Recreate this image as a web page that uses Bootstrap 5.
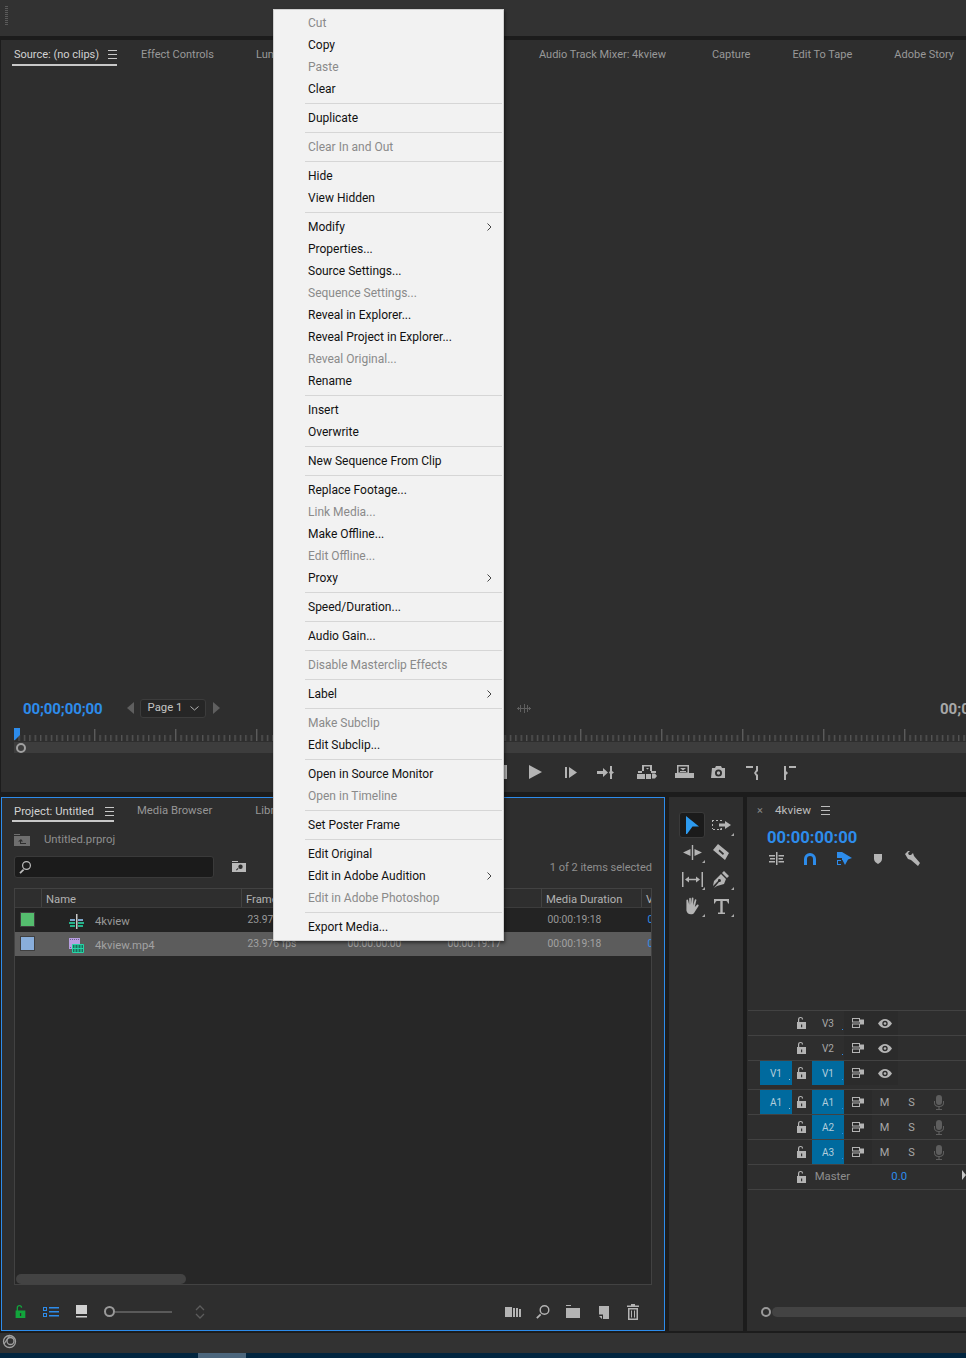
<!DOCTYPE html>
<html lang="en">
<head>
  <meta charset="UTF-8">
  <meta name="viewport" content="width=device-width, initial-scale=1.0">
  <title>Premiere Pro - Project</title>
  <link href="https://cdn.jsdelivr.net/npm/bootstrap@5.3.0/dist/css/bootstrap.min.css" rel="stylesheet">
  <style>
    html, body { width: 966px; height: 1358px; overflow: hidden; }
    body { font-family: Roboto, "Noto Sans", sans-serif; font-size: 11.3px; background: #1c1c1c; color: #9b9b9b; position: relative; }
    svg { display: block; flex: none; }
    .ico { fill: #b4b4b4; }

    .top-bar { height: 36px; background: #323232; padding: 6px 0 0 5px; }
    .gripper { width: 3px; height: 19px; background: repeating-linear-gradient(#5a5a5a 0 1px, transparent 1px 2px); }

    .panel { background: #2e2e2e; }
    .source-panel { margin: 4px 0 5px 1px; height: 752px; overflow: hidden; }
    .tab-strip { height: 26px; padding-left: 11px; gap: 42px; white-space: nowrap; overflow: hidden; font-size: 11px; }
    .tab-item { height: 100%; line-height: 30px; color: #999; }
    .tab-item.active { color: #d2d2d2; border-bottom: 2px solid #c8c8c8; padding: 5px 0 0 2px; margin-right: -18px; width: 105px; justify-content: space-between; }
    .tab-item.active svg { fill: #c8c8c8; }
    .tab-lumetri { width: 80px; }
    .tab-clipmix { width: 119px; }
    .tab-trackmix { width: 131px; }
    .mon-body { height: 631px; }
    .tc-row { height: 22px; padding-left: 22px; }
    .tc-blue { color: #2d8ceb; font-weight: 700; font-size: 15px; margin-top: 2px; letter-spacing: -.1px; }
    .tc-right { width: 26px; margin: 2px 0 0 auto; overflow: hidden; white-space: nowrap; color: #a8a8a8; font-weight: 700; font-size: 15px; }
    .prev-page { margin-left: 24px; }
    .page-picker { width: 66px; height: 19px; background: #262626; border: 1px solid #3c3c3c; border-radius: 3px; padding: 0 6px 0 7px; color: #c4c4c4; margin: 0 7px 0 5px; }
    .marker-glyph { margin-left: 296px; }
    .ruler-wrap { height: 25px; margin-top: 9px; }
    .transport { height: 39px; }

    .lower { gap: 4px; padding-left: 1px; }
    .project-panel { width: 664px; height: 534px; border: 1px solid #2d8ceb; }
    .project-tabs { height: 24px; padding-left: 10px; gap: 43px; }
    .project-tabs .tab-item { line-height: 25px; color: #969696; }
    .project-tabs .tab-item.active { width: 102px; margin-right: -20px; color: #d2d2d2; padding-top: 4px; }
    .file-row { height: 20px; margin-top: 8px; padding-left: 12px; gap: 13px; color: #8f8f8f; }
    .file-row span { margin-top: 1px; }
    .search-row { margin-top: 6px; padding: 0 12px 0 12px; height: 22px; color: #8f8f8f; }
    .search-box { width: 200px; height: 22px; background: #1b1b1b; border: 1px solid #3a3a3a; border-radius: 3px; padding-left: 4px; }
    .bin-search { margin-left: 18px; }
    .sel-count { font-size: 11px; margin-top: 2px; }
    .list-frame { height: 397px; margin: 10px 12px 0 12px; border: 1px solid #424242; background: #272727; }
    .list-rows { height: 385px; }
    .list-row { display: grid; grid-template-columns: 26px 200px 100px 100px 100px 100px 1fr; overflow: hidden; }
    .list-head { height: 19px; background: #2e2e2e; color: #b2b2b2; line-height: 21px; border-bottom: 1px solid #3c3c3c; }
    .list-head > div { border-left: 1px solid #424242; padding-left: 4px; white-space: nowrap; overflow: hidden; }
    .list-head > div:first-child { border-left: 0; }
    .list-item { height: 24px; background: #232323; line-height: 24px; font-size: 10.3px; color: #999; }
    .list-item > div { padding-left: 6.5px; white-space: nowrap; overflow: hidden; }
    .list-item > div:first-child { padding: 4px 0 0 5px; }
    .list-item.picked { background: #5c5c5c; color: #a2a2a2; }
    .name-cell { padding-left: 28px !important; padding-top: 2px; gap: 11px; font-size: 11.3px; }
    .name-cell span { margin-top: 1px; }
    .swatch { width: 15px; height: 15px; border: 1px solid #3f3f3f; }
    .swatch-green { background: #55bd6e; }
    .swatch-blue { background: #89aedb; }
    .val-blue { color: #2d8ceb; }
    .list-scroll { height: 10px; width: 170px; margin-left: 1px; background: #434343; border-radius: 5px; }
    .project-foot { height: 45px; padding: 8px 22px 0 13px; }
    .foot-right { gap: 12px; }
    .foot-right svg { width: 18px; height: 18px; }
    .foot-lock { margin-right: 16px; }
    .foot-list { margin-right: 17px; }
    .foot-icon { margin-right: 16px; }
    .foot-ring { width: 11px; height: 11px; border: 2px solid #9a9a9a; border-radius: 50%; }
    .zoom-line { width: 57px; height: 2px; background: #5a5a5a; }
    .updown { margin-left: 23px; }

    .tools-panel { width: 74px; height: 534px; padding: 15px 0 0 10px; }
    .tool-grid { display: grid; grid-template-columns: 27px 28px; grid-auto-rows: 27px; column-gap: 2px; }
    .tool-cell { display: flex; align-items: center; justify-content: center; width: 26px; height: 26px; position: relative; }
    .tool-cell.on { background: #1b1b1b; border: 1px solid #3a3a3a; border-radius: 3px; }
    .tool-cell.more::after { content: ""; position: absolute; right: 0; bottom: 2px; border-left: 3px solid transparent; border-bottom: 3px solid #a8a8a8; }

    .timeline-panel { width: 219px; height: 534px; }
    .tl-tabs { height: 25px; padding: 2px 0 0 10px; line-height: 25px; gap: 10px; color: #bcbcbc; font-size: 11.7px; }
    .tl-tabs svg { fill: #bcbcbc; }
    .tl-close { color: #888; font-size: 11px; width: 8px; }
    .tl-code { padding: 5px 0 0 20px; height: 26px; }
    .tl-code .tc-blue { font-size: 16.6px; line-height: 22px; margin-top: 0; letter-spacing: 0; }
    .tl-icons { padding: 1px 0 0 12px; height: 20px; }
    .tl-icons > div { width: 34px; display: flex; justify-content: center; }
    .tracks { margin-top: 142px; padding-left: 1px; }
    .track { height: 25px; border-top: 1px solid #424242; font-size: 10px; color: #a8a8a8; }
    .track.split { margin-top: 4px; }
    .track.end { border-bottom: 1px solid #424242; height: 26px; }
    .patch, .label-cell { width: 32px; height: 24px; text-align: center; line-height: 25px; position: relative; }
    .patch { margin-left: 12px; }
    .no-patch { width: 32px; margin-left: 12px; }
    .patch.live, .label-cell.live { background: #006a9e; color: #b4cedc; }
    .label-cell::after { content: ""; position: absolute; right: 1px; bottom: 5px; width: 1px; height: 1px; background: #2d8ceb; }
    .patch.live::after { content: ""; position: absolute; right: 2px; bottom: 5px; width: 1px; height: 1px; background: #a8c8d8; }
    .lock-cell { width: 20px; display: flex; justify-content: center; }
    .sync-cell { width: 28px; height: 24px; background: #2b2b2b; display: flex; justify-content: center; align-items: center; }
    .eye-cell { width: 26px; height: 24px; background: #2b2b2b; display: flex; justify-content: center; align-items: center; }
    .ms-cell { width: 27px; text-align: center; font-size: 11px; line-height: 25px; }
    .sync-cell + .ms-cell { margin-left: -1px; }
    .mic-cell { width: 28px; display: flex; justify-content: center; }
    .master-name { margin-left: 3px; width: 77px; font-size: 11.3px; color: #8f8f8f; }
    .master-val { width: 71px; font-size: 11.3px; color: #2d8ceb; }
    .master-mark { width: 0; height: 0; border-left: 4px solid #c8c8c8; border-top: 5px solid transparent; border-bottom: 5px solid transparent; margin-top: -5px; }
    .tl-foot { margin-top: 117px; padding-left: 14px; }
    .tl-scroll { flex: 1; height: 10px; background: #434343; border-radius: 5px 0 0 5px; }
    .tl-ring { width: 10px; height: 10px; border: 2px solid #9a9a9a; border-radius: 50%; margin-right: 1px; }

    .status-bar { height: 20px; margin-top: 2px; background: #323232; padding: 1px 0 0 2px; }
    .page-scroll { height: 5px; background: #02253f; padding-left: 198px; }
    .page-thumb { width: 48px; height: 5px; background: #4c667c; }

    .ctx-menu { top: 9px; left: 273px; width: 231px; height: 932px; padding: 2px 1px; margin: 0; border: 1px solid #cfcfcf; border-radius: 0; background: #f2f2f2; box-shadow: 1px 2px 3px rgba(0,0,0,.5); font-size: 12px; }
    .ctx-menu .dropdown-item { height: 22px; line-height: 22px; padding: 0 10px 0 33px; color: #111; background: transparent; display: flex; justify-content: space-between; align-items: center; }
    .ctx-menu .dropdown-item.disabled { color: #8a8a8a; }
    .ctx-menu .dropdown-divider { margin: 3px 0 3px 30px; height: 1px; border: 0; background: #d6d6d6; opacity: 1; }
  </style>
</head>
<body>
  <svg width="0" height="0" class="position-absolute">
    <symbol id="burger" viewBox="0 0 9 9"><path d="M0 0h9v1H0zM0 4h9v1H0zM0 8h9v1H0z"/></symbol>
    <symbol id="lock" viewBox="0 0 10 12"><path d="M0 5h9v7H0zM1 5V2.500C1 .8 2.100 0 3.600 0S6 .8 6.100 2.500H4.900C4.800 1.600 4.400 1.100 3.600 1.100S2.200 1.700 2.200 2.500V5z"/><path d="M4 7.500h1.200v2.700H4z" fill="#2e2e2e"/></symbol>
    <symbol id="sync" viewBox="0 0 13 10"><path fill-rule="evenodd" d="M0 0h8v4.500H0zM1 1v2.500h6V1zM0 5.500h8V10H0zM1 6.500V9h6V6.500z"/><path d="M8 1.500h4v5H8z"/></symbol>
    <symbol id="eye" viewBox="0 0 14 9"><path fill-rule="evenodd" d="M0 4.500C2 1.500 4.400 0 7 0s5 1.500 7 4.500C12 7.500 9.600 9 7 9S2 7.500 0 4.500zM7 1.800a2.700 2.700 0 100 5.400 2.700 2.700 0 000-5.400z"/><circle cx="7" cy="4.500" r="1.300"/></symbol>
    <symbol id="mic" viewBox="0 0 10 15"><rect x="2" y="0" width="6" height="10" rx="3"/><path d="M0 6h1v2c0 2 1.500 3 4 3s4-1 4-3V6h1v2c0 2.500-1.800 3.800-4.400 4v2H8v1H2v-1h2.400v-2C1.800 11.800 0 10.500 0 8z"/></symbol>
    <symbol id="glass" viewBox="0 0 12 13"><path fill-rule="evenodd" d="M7.500 0a4.500 4.500 0 110 9 4.500 4.500 0 010-9zm0 1.200a3.300 3.300 0 100 6.600 3.300 3.300 0 000-6.600z"/><path d="M4 8l1.200 1.200-3.600 3.600L.4 11.600z"/></symbol>
  </svg>

  <div class="top-bar"><div class="gripper"></div></div>

  <!-- Source monitor -->
  <section class="panel source-panel">
    <div class="tab-strip d-flex">
      <div class="tab-item active d-flex align-items-center"><span>Source: (no clips)</span><svg width="9" height="9"><use href="#burger"/></svg></div>
      <div class="tab-item">Effect Controls</div>
      <div class="tab-item tab-lumetri">Lumetri Scopes</div>
      <div class="tab-item tab-clipmix">Audio Clip Mixer: 4kview</div>
      <div class="tab-item tab-trackmix">Audio Track Mixer: 4kview</div>
      <div class="tab-item">Capture</div>
      <div class="tab-item">Edit To Tape</div>
      <div class="tab-item">Adobe Story</div>
    </div>
    <div class="mon-body"></div>
    <div class="tc-row d-flex align-items-center">
      <span class="tc-blue">00;00;00;00</span>
      <svg class="prev-page" width="8" height="12" fill="#5f5f5f"><path d="M7 0v12L0 6z"/></svg>
      <div class="page-picker d-flex justify-content-between align-items-center"><span>Page 1</span><svg width="9" height="5" fill="none" stroke="#b4b4b4"><path d="M.5.500l4 3.500 4-3.500"/></svg></div>
      <svg width="8" height="12" fill="#5f5f5f"><path d="M0 0v12l7-6z"/></svg>
      <svg class="marker-glyph" width="14" height="9" fill="#5f5f5f"><path d="M0 4h14v1H0zM3 1h1v7H3zM7 0h1v9H7zM10 1h1v7h-1zM1 3h1v3H1zM12 3h1v3h-1z"/></svg>
      <span class="tc-right">00;00;00;00</span>
    </div>
    <div class="ruler-wrap">
      <svg width="965" height="25">
        <defs>
          <pattern id="ticks" x="12.300" y="0" width="81" height="14" patternUnits="userSpaceOnUse">
            <rect x="0" y="1" width="1" height="12" fill="#6e6e6e"/>
            <rect x="5.400" y="7" width="1" height="6" fill="#636363"/><rect x="10.800" y="7" width="1" height="6" fill="#636363"/><rect x="16.200" y="7" width="1" height="6" fill="#636363"/><rect x="21.600" y="7" width="1" height="6" fill="#636363"/><rect x="27" y="7" width="1" height="6" fill="#636363"/><rect x="32.400" y="7" width="1" height="6" fill="#636363"/><rect x="37.800" y="7" width="1" height="6" fill="#636363"/><rect x="43.200" y="7" width="1" height="6" fill="#636363"/><rect x="48.600" y="7" width="1" height="6" fill="#636363"/><rect x="54" y="7" width="1" height="6" fill="#636363"/><rect x="59.400" y="7" width="1" height="6" fill="#636363"/><rect x="64.800" y="7" width="1" height="6" fill="#636363"/><rect x="70.200" y="7" width="1" height="6" fill="#636363"/><rect x="75.600" y="7" width="1" height="6" fill="#636363"/>
          </pattern>
        </defs>
        <rect x="13" y="0" width="952" height="14" fill="url(#ticks)"/>
        <rect x="13" y="14" width="952" height="11" fill="#3d3d3d"/>
        <path d="M13 0h6v7l-5 5h-1z" fill="#2d8ceb"/>
        <circle cx="20" cy="20" r="4" fill="none" stroke="#a0a0a0" stroke-width="2"/>
      </svg>
    </div>
    <div class="transport">
      <svg width="965" height="39" class="ico">
        <path d="M501 12h5v14h-5z"/>
        <path d="M528 12l13 7-13 7z"/>
        <path d="M564 14h2v11h-2zM568 14l8 5.500-8 5.500z"/>
        <path d="M596 18h6v-3l5 4.500-5 4.500v-3h-6zM609 13h2v5l2 1.500-2 1.500v5h-2v-5l-1-1.500 1-1.500z"/>
        <path fill-rule="evenodd" d="M641 12h10v6h4v2h-5v-2h-1v-4.500h-6V18h-2v2h-4v-2h4zM636 21h8v5h-8zM645 21h5v5h-5z"/>
        <path d="M645 15h3l-1.500 1.500zM651 20.500h3l2 2.500-2 2.500h-3z"/>
        <path fill-rule="evenodd" d="M676 12h12v8h5v5h-19v-5h2zM677.500 13.500v6h9v-6z"/>
        <path d="M679 15h6l-3 2.500zM679 18h6v1h-6z"/>
        <path fill-rule="evenodd" d="M711 15h3l1-2h5l1 2h3v10h-14zM717.500 16.500a3.500 3.500 0 100 7 3.500 3.500 0 000-7zm0 1.800a1.700 1.700 0 110 3.400 1.700 1.700 0 010-3.400z"/>
        <path d="M745 13h7v2h-7zM755 13h2v5l-2 2 2 2v5h-2v-4l-2-3 2-3z"/>
        <path d="M783 13h2v5l2 2-2 2v5h-2zM788 13h7v2h-7z"/>
      </svg>
    </div>
  </section>

  <div class="lower d-flex">
    <!-- Project -->
    <section class="panel project-panel d-flex flex-column">
      <div class="project-tabs d-flex">
        <div class="tab-item active d-flex align-items-center"><span>Project: Untitled</span><svg width="9" height="9"><use href="#burger"/></svg></div>
        <div class="tab-item">Media Browser</div>
        <div class="tab-item">Libraries</div>
      </div>
      <div class="file-row d-flex align-items-center">
        <svg width="17" height="12" fill="#6e6e6e"><path fill-rule="evenodd" d="M0 0h6v1H0zM0 2h16v10H0zM7 5L4 7.500h2V10h6V9H7V7.500h2z"/></svg>
        <span>Untitled.prproj</span>
      </div>
      <div class="search-row d-flex align-items-center">
        <div class="search-box d-flex align-items-center"><svg width="12" height="13" fill="#bdbdbd"><use href="#glass"/></svg></div>
        <svg class="bin-search" width="15" height="12" fill="#b8b8b8"><path fill-rule="evenodd" d="M0 0h6v1H0zM0 2h14v9H0zM8.500 3.500a2.200 2.200 0 100 4.400 2.200 2.200 0 000-4.400zM5.800 7L4 8.800l.7.700L6.500 7.700z"/></svg>
        <span class="ms-auto sel-count">1 of 2 items selected</span>
      </div>
      <div class="list-frame">
        <div class="list-rows">
          <div class="list-row list-head">
            <div></div><div>Name</div><div>Frame Rate</div><div>Media Start</div><div>Media End</div><div>Media Duration</div><div>V</div>
          </div>
          <div class="list-row list-item">
            <div><div class="swatch swatch-green"></div></div>
            <div class="name-cell d-flex align-items-center">
              <svg width="15" height="15"><path d="M7 0h1.500v15H7z" fill="#c8c8c8"/><path d="M1 5h5v2H1zM9 5h5v2H9z" fill="#7da3c9"/><path d="M0 8h6v2H0zM9 8h6v2H9zM1 11h5v2H1zM9 11h5v2H9z" fill="#25b18a"/></svg>
              <span>4kview</span>
            </div>
            <div>23.976 fps</div><div>00:00:00:00</div><div>00:00:19:17</div><div>00:00:19:18</div><div class="val-blue">0</div>
          </div>
          <div class="list-row list-item picked">
            <div><div class="swatch swatch-blue"></div></div>
            <div class="name-cell d-flex align-items-center">
              <svg width="15" height="15"><path d="M0 0h11v11H0z" fill="#b79fe0"/><path d="M1 1.500h9M1 9.500h9" stroke="#6f5b92" stroke-dasharray="1 1"/><path d="M3.500 6.500h11v8h-11z" fill="#1e6b5c" stroke="#24d6a6"/><path d="M6 7v7M9 7v7M12 7v7M4 10.500h10" stroke="#24d6a6"/></svg>
              <span>4kview.mp4</span>
            </div>
            <div>23.976 fps</div><div>00:00:00:00</div><div>00:00:19:17</div><div>00:00:19:18</div><div class="val-blue">0</div>
          </div>
        </div>
        <div class="list-scroll"></div>
      </div>
      <div class="project-foot d-flex align-items-center justify-content-between">
        <div class="d-flex align-items-center">
          <svg class="foot-lock" width="12" height="13" fill="#12a53c"><use href="#lock"/></svg>
          <svg class="foot-list" width="16" height="12" fill="#2d8ceb"><path fill-rule="evenodd" d="M0 1h4v4H0zM1 2v2h2V2zM0 7h4v4H0zM1 8v2h2V8zM6 1h10v1.500H6zM6 5h10v1.500H6zM6 9h10v1.500H6z"/></svg>
          <svg class="foot-icon" width="12" height="13" fill="#d0d0d0"><path d="M0 0h11v9H0zM0 11h11v1.500H0z"/></svg>
          <div class="foot-ring"></div>
          <div class="zoom-line"></div>
          <svg class="updown" width="10" height="14" fill="none" stroke="#5c5c5c" stroke-width="1.300"><path d="M1 5l4-4 4 4M1 9l4 4 4-4"/></svg>
        </div>
        <div class="foot-right d-flex align-items-center ico">
          <svg viewBox="0 0 18 18"><path d="M1 4h7v10H1zM9 5h2v9H9zM12 5h2v9h-2zM15 6h2v8h-2z"/></svg>
          <svg viewBox="0 0 18 18"><path fill-rule="evenodd" d="M10.500 2a5 5 0 110 10 5 5 0 010-10zm0 1.400a3.600 3.600 0 100 7.200 3.600 3.600 0 000-7.200z"/><path d="M6 10.700l1.300 1.300-3.800 3.800-1.300-1.300z"/></svg>
          <svg viewBox="0 0 18 18"><path d="M2 2h5v1H2zM2 5h14v10H2z"/></svg>
          <svg viewBox="0 0 18 18"><path d="M5 3h10v13H9v-4.500H5zM5 13h3v3z"/></svg>
          <svg viewBox="0 0 18 18"><path fill-rule="evenodd" d="M7 1h4v1.500h4V4H3V2.500h4zM4 5h10v12H4zM5.500 6.500v9h7v-9z"/><path d="M7 7.500h1v7H7zM10 7.500h1v7h-1z"/></svg>
        </div>
      </div>
    </section>

    <!-- Tools -->
    <section class="panel tools-panel">
      <div class="tool-grid ico">
        <div class="tool-cell on"><svg width="14" height="18"><path d="M1 0l13 10.500H7.500L2 18H1z" fill="#2d9bf0"/></svg></div>
        <div class="tool-cell more"><svg width="19" height="12"><path d="M0 1h2v1H1v1H0zM4 1h2v1H4zM8 1h2v1H8zM0 5h1v2H0zM0 9h1v2h2v-1H0zM5 10h2v1H5zM9 9h1v2H8v-1z"/><path d="M7 4.500h6V2l6 4-6 4V7.500H7z"/></svg></div>
        <div class="tool-cell more"><svg width="19" height="15"><path d="M8.800 0h1.400v15H8.800zM7.500 4v7L0 7.500zM11.500 4v7L19 7.500z"/></svg></div>
        <div class="tool-cell"><svg width="16" height="16"><path fill-rule="evenodd" d="M5 0l11 9-4 7L0 6zM6.500 5.500l-1 1.500 4.500 4 1-1.500z"/></svg></div>
        <div class="tool-cell more"><svg width="21" height="15"><path d="M0 0h1.500v15H0zM19.500 0H21v15h-1.500zM3 7.500l4-3v2.200h7V4.500l4 3-4 3V8.300H7v2.200z"/></svg></div>
        <div class="tool-cell more"><svg width="16" height="17"><path fill-rule="evenodd" d="M11 0l5 5-2 2-5-5zM8 3l5 5-2 5-7 2-3 2 5-6a1.500 1.500 0 10-1-1l-5 5 1-5z"/></svg></div>
        <div class="tool-cell more"><svg width="18" height="19" viewBox="0 0 16 17"><path d="M3 3c0-1 1.500-1 1.500 0l1 4V1.500C5.500.5 7 .5 7 1.500V7l.8-6c.2-1 1.600-.8 1.500.2L9 7.500l1.500-5c.3-1 1.600-.6 1.400.4L10.500 9l2-2c.9-.8 2 .2 1.200 1.200L10 14c-.6.900-1.500 1.500-3 1.500-2.500 0-3.500-1.500-4-3.500z"/></svg></div>
        <div class="tool-cell more"><svg width="15" height="15"><path d="M0 0h15v4.500h-1C13.500 2.500 13 2 11 2H8.700v11.500H11V15H4v-1.500h2.300V2H4C2 2 1.500 2.500 1 4.500H0z"/></svg></div>
      </div>
    </section>

    <!-- Timeline -->
    <section class="panel timeline-panel">
      <div class="tl-tabs d-flex align-items-center">
        <span class="tl-close">×</span><span>4kview</span><svg width="9" height="9"><use href="#burger"/></svg>
      </div>
      <div class="tl-code"><span class="tc-blue">00:00:00:00</span></div>
      <div class="tl-icons d-flex align-items-center">
        <div><svg width="15" height="13" class="ico"><path d="M7 0h1.500v13H7zM0 3h6v1.500H0zM9.500 3H15v1.500H9.500zM1 6h5v1.500H1zM9.500 6H14v1.500H9.500zM0 9h6v1.500H0zM9.500 9H15v1.500H9.500z"/></svg></div>
        <div><svg width="12" height="12" fill="none" stroke="#2d8ceb" stroke-width="3"><path d="M1.500 12V6a4.500 4.500 0 019 0v6"/></svg></div>
        <div><svg width="15" height="13" fill="#2d8ceb"><path d="M0 0h5v6H0zM0 8h4v1H1v3h3v1H0zM5 0l10 6-4 1.500L8 13 5.500 8H5z"/></svg></div>
        <div><svg width="8" height="10" class="ico"><path d="M0 0h8v5c0 2-2 4-4 5-2-1-4-3-4-5z"/></svg></div>
        <div><svg width="15" height="15" class="ico"><path d="M0 3l3-3h2L3 2l1 2h2l2-2 1 3 6 7-2 3-7-6-3-1z"/></svg></div>
      </div>

      <div class="tracks">
        <div class="track d-flex align-items-center">
          <div class="no-patch"></div><div class="lock-cell"><svg width="10" height="12" class="ico"><use href="#lock"/></svg></div>
          <div class="label-cell">V3</div>
          <div class="sync-cell"><svg width="13" height="10" class="ico"><use href="#sync"/></svg></div>
          <div class="eye-cell"><svg width="14" height="9" class="ico"><use href="#eye"/></svg></div>
        </div>
        <div class="track d-flex align-items-center">
          <div class="no-patch"></div><div class="lock-cell"><svg width="10" height="12" class="ico"><use href="#lock"/></svg></div>
          <div class="label-cell">V2</div>
          <div class="sync-cell"><svg width="13" height="10" class="ico"><use href="#sync"/></svg></div>
          <div class="eye-cell"><svg width="14" height="9" class="ico"><use href="#eye"/></svg></div>
        </div>
        <div class="track d-flex align-items-center">
          <div class="patch live">V1</div><div class="lock-cell"><svg width="10" height="12" class="ico"><use href="#lock"/></svg></div>
          <div class="label-cell live">V1</div>
          <div class="sync-cell"><svg width="13" height="10" class="ico"><use href="#sync"/></svg></div>
          <div class="eye-cell"><svg width="14" height="9" class="ico"><use href="#eye"/></svg></div>
        </div>
        <div class="track split d-flex align-items-center">
          <div class="patch live">A1</div><div class="lock-cell"><svg width="10" height="12" class="ico"><use href="#lock"/></svg></div>
          <div class="label-cell live">A1</div>
          <div class="sync-cell"><svg width="13" height="10" class="ico"><use href="#sync"/></svg></div>
          <div class="ms-cell">M</div><div class="ms-cell">S</div>
          <div class="mic-cell"><svg width="10" height="15" fill="#5e5e5e"><use href="#mic"/></svg></div>
        </div>
        <div class="track d-flex align-items-center">
          <div class="no-patch"></div><div class="lock-cell"><svg width="10" height="12" class="ico"><use href="#lock"/></svg></div>
          <div class="label-cell live">A2</div>
          <div class="sync-cell"><svg width="13" height="10" class="ico"><use href="#sync"/></svg></div>
          <div class="ms-cell">M</div><div class="ms-cell">S</div>
          <div class="mic-cell"><svg width="10" height="15" fill="#5e5e5e"><use href="#mic"/></svg></div>
        </div>
        <div class="track d-flex align-items-center">
          <div class="no-patch"></div><div class="lock-cell"><svg width="10" height="12" class="ico"><use href="#lock"/></svg></div>
          <div class="label-cell live">A3</div>
          <div class="sync-cell"><svg width="13" height="10" class="ico"><use href="#sync"/></svg></div>
          <div class="ms-cell">M</div><div class="ms-cell">S</div>
          <div class="mic-cell"><svg width="10" height="15" fill="#5e5e5e"><use href="#mic"/></svg></div>
        </div>
        <div class="track end d-flex align-items-center">
          <div class="no-patch"></div><div class="lock-cell"><svg width="10" height="12" class="ico"><use href="#lock"/></svg></div>
          <div class="master-name">Master</div>
          <div class="master-val">0.0</div>
          <div class="master-mark"></div>
        </div>
      </div>
      <div class="tl-foot d-flex align-items-center">
        <div class="tl-ring"></div><div class="tl-scroll"></div>
      </div>
    </section>
  </div>

  <div class="status-bar">
    <svg width="15" height="15" fill="none" stroke="#a0a0a0" stroke-width="1.300"><circle cx="7.500" cy="7.500" r="6"/><circle cx="8.500" cy="7" r="3.500"/><path d="M2 10l6-9"/></svg>
  </div>
  <div class="page-scroll"><div class="page-thumb"></div></div>

  <!-- Clip context menu -->
  <div class="dropdown-menu show ctx-menu">
    <a class="dropdown-item disabled">Cut</a>
    <a class="dropdown-item">Copy</a>
    <a class="dropdown-item disabled">Paste</a>
    <a class="dropdown-item">Clear</a>
    <div class="dropdown-divider"></div>
    <a class="dropdown-item">Duplicate</a>
    <div class="dropdown-divider"></div>
    <a class="dropdown-item disabled">Clear In and Out</a>
    <div class="dropdown-divider"></div>
    <a class="dropdown-item">Hide</a>
    <a class="dropdown-item">View Hidden</a>
    <div class="dropdown-divider"></div>
    <a class="dropdown-item">Modify<svg width="5" height="8" fill="none" stroke="#444"><path d="M.5.500l3.500 3.500-3.500 3.500"/></svg></a>
    <a class="dropdown-item">Properties...</a>
    <a class="dropdown-item">Source Settings...</a>
    <a class="dropdown-item disabled">Sequence Settings...</a>
    <a class="dropdown-item">Reveal in Explorer...</a>
    <a class="dropdown-item">Reveal Project in Explorer...</a>
    <a class="dropdown-item disabled">Reveal Original...</a>
    <a class="dropdown-item">Rename</a>
    <div class="dropdown-divider"></div>
    <a class="dropdown-item">Insert</a>
    <a class="dropdown-item">Overwrite</a>
    <div class="dropdown-divider"></div>
    <a class="dropdown-item">New Sequence From Clip</a>
    <div class="dropdown-divider"></div>
    <a class="dropdown-item">Replace Footage...</a>
    <a class="dropdown-item disabled">Link Media...</a>
    <a class="dropdown-item">Make Offline...</a>
    <a class="dropdown-item disabled">Edit Offline...</a>
    <a class="dropdown-item">Proxy<svg width="5" height="8" fill="none" stroke="#444"><path d="M.5.500l3.500 3.500-3.500 3.500"/></svg></a>
    <div class="dropdown-divider"></div>
    <a class="dropdown-item">Speed/Duration...</a>
    <div class="dropdown-divider"></div>
    <a class="dropdown-item">Audio Gain...</a>
    <div class="dropdown-divider"></div>
    <a class="dropdown-item disabled">Disable Masterclip Effects</a>
    <div class="dropdown-divider"></div>
    <a class="dropdown-item">Label<svg width="5" height="8" fill="none" stroke="#444"><path d="M.5.500l3.500 3.500-3.500 3.500"/></svg></a>
    <div class="dropdown-divider"></div>
    <a class="dropdown-item disabled">Make Subclip</a>
    <a class="dropdown-item">Edit Subclip...</a>
    <div class="dropdown-divider"></div>
    <a class="dropdown-item">Open in Source Monitor</a>
    <a class="dropdown-item disabled">Open in Timeline</a>
    <div class="dropdown-divider"></div>
    <a class="dropdown-item">Set Poster Frame</a>
    <div class="dropdown-divider"></div>
    <a class="dropdown-item">Edit Original</a>
    <a class="dropdown-item">Edit in Adobe Audition<svg width="5" height="8" fill="none" stroke="#444"><path d="M.5.500l3.500 3.500-3.500 3.500"/></svg></a>
    <a class="dropdown-item disabled">Edit in Adobe Photoshop</a>
    <div class="dropdown-divider"></div>
    <a class="dropdown-item">Export Media...</a>
  </div>

  <script src="https://cdn.jsdelivr.net/npm/bootstrap@5.3.0/dist/js/bootstrap.bundle.min.js"></script>
</body>
</html>
